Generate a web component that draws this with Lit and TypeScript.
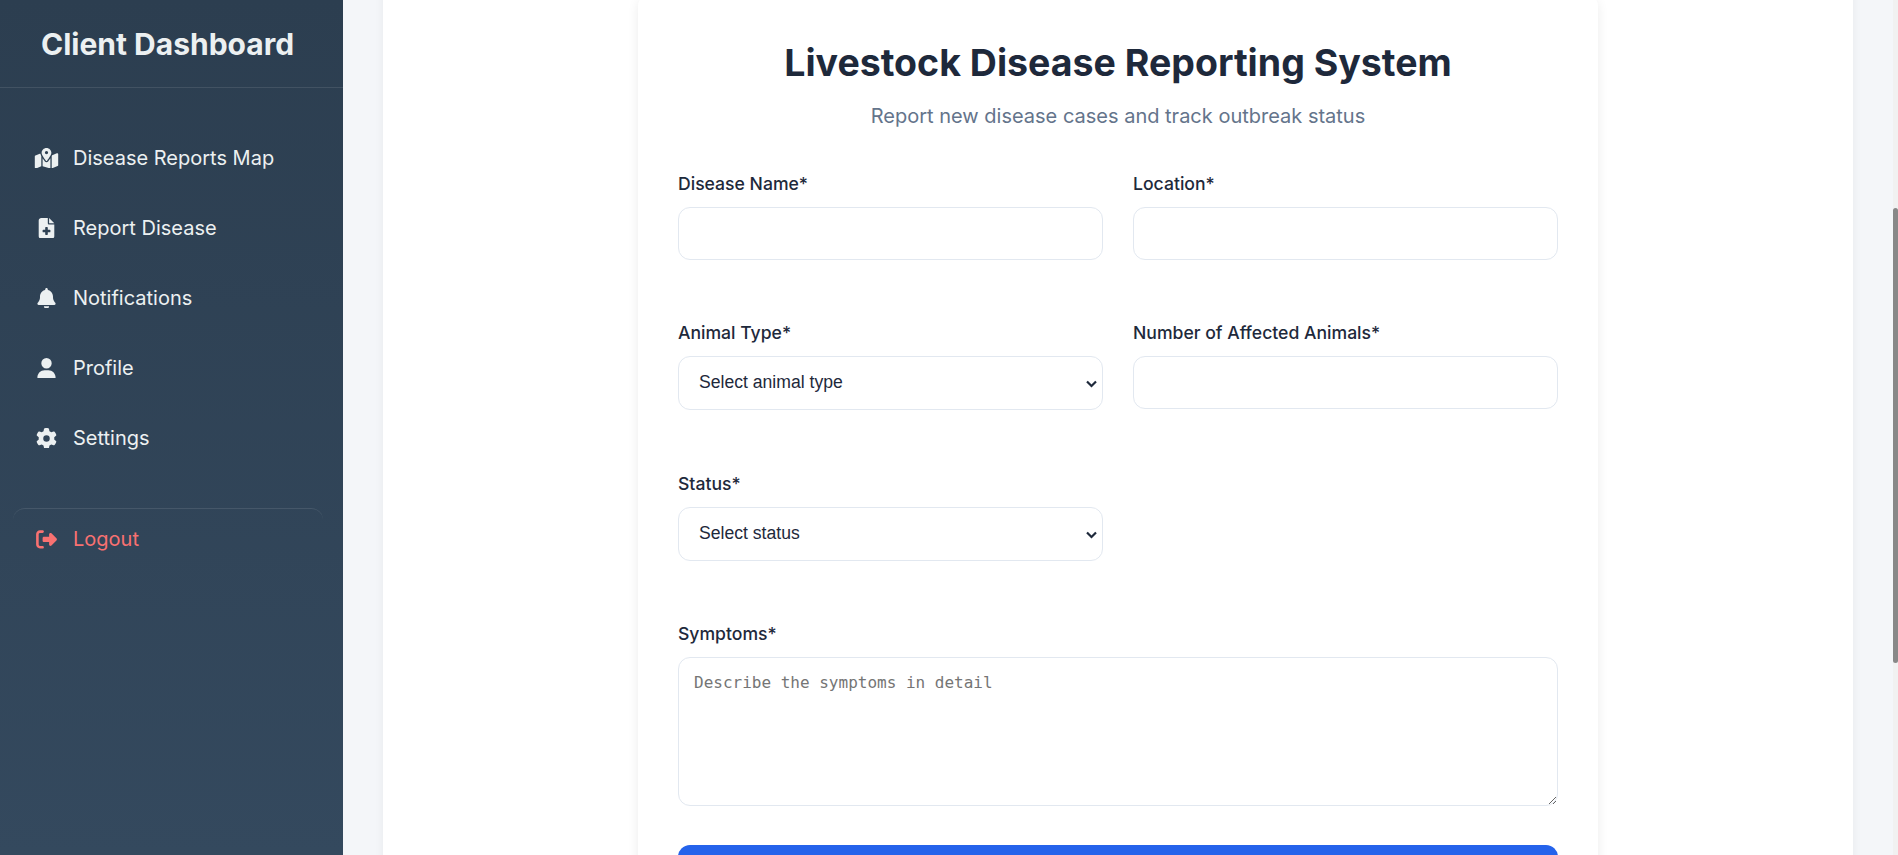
import { LitElement, html, css, svg } from "lit";
import { customElement } from "lit/decorators.js";

const ICONS = {
  map: { vb: "0 0 576 512", d: "M408 120c0 54.6-73.1 151.9-105.2 192c-7.7 9.6-22 9.6-29.6 0C241.1 271.9 168 174.6 168 120C168 53.7 221.7 0 288 0s120 53.7 120 120zm8 80.4c3.5-6.9 6.7-13.8 9.6-20.6c.5-1.2 1-2.5 1.5-3.7l116-46.4C558.9 123.4 576 135 576 152V422.8c0 9.8-6 18.6-15.1 22.3L416 503V200.4zM137.6 138.3c2.4 14.1 7.2 28.3 12.8 41.5c2.9 6.8 6.1 13.7 9.6 20.6V451.8L32.9 502.7C17.1 509 0 497.4 0 480.4V209.6c0-9.8 6-18.6 15.1-22.3l122.6-49zM327.8 332c13.9-17.4 35.7-45.7 56.2-77V504.3L192 449.4V255c20.5 31.3 42.3 59.6 56.2 77c20.5 25.6 59.1 25.6 79.6 0zM288 152a40 40 0 1 0 0-80 40 40 0 1 0 0 80z" },
  file: { vb: "0 0 384 512", d: "M64 0C28.7 0 0 28.7 0 64V448c0 35.3 28.7 64 64 64H320c35.3 0 64-28.7 64-64V160H256c-17.7 0-32-14.3-32-32V0H64zM256 0V128H384L256 0zM160 240c0-8.8 7.2-16 16-16h32c8.8 0 16 7.2 16 16v48h48c8.8 0 16 7.2 16 16v32c0 8.8-7.2 16-16 16H224v48c0 8.8-7.2 16-16 16H176c-8.8 0-16-7.2-16-16V352H112c-8.8 0-16-7.2-16-16V304c0-8.8 7.2-16 16-16h48V240z" },
  bell: { vb: "0 0 448 512", d: "M224 0c-17.7 0-32 14.3-32 32V51.2C119 66 64 130.6 64 208v18.8c0 47-17.3 92.4-48.5 127.6l-7.4 8.3c-8.4 9.4-10.4 22.9-5.3 34.4S19.4 416 32 416H416c12.6 0 24-7.4 29.2-18.9s3.1-25-5.3-34.4l-7.4-8.3C401.3 319.2 384 273.9 384 226.8V208c0-77.4-55-142-128-156.8V32c0-17.7-14.3-32-32-32zm45.3 493.3c12-12 18.7-28.3 18.7-45.3H224 160c0 17 6.7 33.3 18.7 45.3s28.3 18.7 45.3 18.7s33.3-6.7 45.3-18.7z" },
  user: { vb: "0 0 448 512", d: "M224 256A128 128 0 1 0 224 0a128 128 0 1 0 0 256zm-45.7 48C79.8 304 0 383.8 0 482.3C0 498.7 13.3 512 29.7 512H418.3c16.4 0 29.7-13.3 29.7-29.7C448 383.8 368.2 304 269.7 304H178.3z" },
  cog: { vb: "0 0 512 512", d: "M495.9 166.6c3.2 8.7 .5 18.4-6.4 24.6l-43.3 39.4c1.1 8.3 1.7 16.8 1.7 25.4s-.6 17.1-1.7 25.4l43.3 39.4c6.9 6.2 9.6 15.9 6.4 24.6c-4.4 11.9-9.7 23.3-15.8 34.3l-4.7 8.1c-6.6 11-14 21.4-22.1 31.2c-5.9 7.2-15.7 9.6-24.5 6.8l-55.7-17.7c-13.4 10.3-28.2 18.9-44 25.4l-12.5 57.1c-2 9.1-9 16.3-18.2 17.8c-13.8 2.3-28 3.5-42.5 3.5s-28.7-1.2-42.5-3.5c-9.2-1.5-16.2-8.7-18.2-17.8l-12.5-57.1c-15.8-6.5-30.6-15.1-44-25.4L83.1 425.9c-8.8 2.8-18.6 .3-24.5-6.8c-8.1-9.8-15.5-20.2-22.1-31.2l-4.7-8.1c-6.1-11-11.4-22.4-15.8-34.3c-3.2-8.7-.5-18.4 6.4-24.6l43.3-39.4C64.6 273.1 64 264.6 64 256s.6-17.1 1.7-25.4L22.4 191.2c-6.9-6.2-9.6-15.9-6.4-24.6c4.4-11.9 9.7-23.3 15.8-34.3l4.7-8.1c6.6-11 14-21.4 22.1-31.2c5.9-7.2 15.7-9.6 24.5-6.8l55.7 17.7c13.4-10.3 28.2-18.9 44-25.4l12.5-57.1c2-9.1 9-16.3 18.2-17.8C227.3 1.2 241.5 0 256 0s28.7 1.2 42.5 3.5c9.2 1.5 16.2 8.7 18.2 17.8l12.5 57.1c15.8 6.5 30.6 15.1 44 25.4l55.7-17.7c8.8-2.8 18.6-.3 24.5 6.8c8.1 9.8 15.5 20.2 22.1 31.2l4.7 8.1c6.1 11 11.4 22.4 15.8 34.3zM256 336a80 80 0 1 0 0-160 80 80 0 1 0 0 160z" },
  out: { vb: "0 0 512 512", d: "M377.9 105.9L500.7 228.7c7.2 7.2 11.3 17.1 11.3 27.3s-4.1 20.1-11.3 27.3L377.9 406.1c-6.4 6.4-15 9.9-24 9.9c-18.7 0-33.9-15.2-33.9-33.9l0-62.1-128 0c-17.7 0-32-14.3-32-32l0-64c0-17.7 14.3-32 32-32l128 0 0-62.1c0-18.7 15.2-33.9 33.9-33.9c9 0 17.6 3.6 24 9.9zM160 96L96 96c-17.7 0-32 14.3-32 32l0 256c0 17.7 14.3 32 32 32l64 0c17.7 0 32 14.3 32 32s-14.3 32-32 32l-64 0c-53 0-96-43-96-96L0 128C0 75 43 32 96 32l64 0c17.7 0 32 14.3 32 32s-14.3 32-32 32z" },
};
type IconName = keyof typeof ICONS;

const NAV: { icon: IconName; label: string }[] = [
  { icon: "map", label: "Disease Reports Map" },
  { icon: "file", label: "Report Disease" },
  { icon: "bell", label: "Notifications" },
  { icon: "user", label: "Profile" },
  { icon: "cog", label: "Settings" },
];

function icon(name: IconName) {
  const i = ICONS[name];
  return html`<svg class="icon" viewBox=${i.vb} fill="currentColor" aria-hidden="true">${svg`<path d=${i.d}></path>`}</svg>`;
}

@customElement("app-root")
export class AppRoot extends LitElement {
  static styles = css`
    :host {
      display: flex;
      width: 100%;
      height: 855px;
      overflow: hidden;
      font-family: Inter, "Liberation Sans", sans-serif;
      background: #f4f6f9;
    }
    * { box-sizing: border-box; }
    .sidebar {
      width: 343px;
      flex: none;
      height: 855px;
      background: linear-gradient(180deg, #2c3e50, #34495e);
      color: #ecf0f1;
    }
    .brand {
      height: 88px;
      border-bottom: 1px solid rgba(255,255,255,.1);
      display: flex;
      align-items: center;
      padding-left: 41px;
      font-size: 30px;
      font-weight: 700;
    }
    .nav { padding-top: 35px; display: flex; flex-direction: column; }
    .item {
      height: 70px;
      padding-left: 33.5px;
      display: flex;
      align-items: center;
      gap: 14.5px;
      font-size: 20px;
    }
    .icon { width: 25px; height: 20.8px; flex: none; display: block; }
    .logout-wrap {
      margin: 35px 20px 0 13px;
      border-top: 1px solid rgba(255,255,255,.1);
      border-radius: 12px 12px 0 0;
    }
    .logout { color: #f87171; padding-left: 20.5px; height: 60px; }
    main {
      flex: 1;
      min-width: 0;
      height: 855px;
      overflow: hidden;
      padding: 0 40px;
    }
    .panel {
      background: #fff;
      height: 1200px;
      margin-top: -40px;
      box-shadow: 0 0 10px rgba(0,0,0,.05);
      display: flex;
      justify-content: center;
      padding-top: 34px;
    }
    .card {
      width: 960px;
      height: 1100px;
      background: #fff;
      border-radius: 12px;
      box-shadow: 0 4px 12px rgba(0,0,0,.08);
      padding: 45px 40px 40px;
    }
    h1 {
      margin: 0;
      text-align: center;
      font-size: 37.5px;
      line-height: 48px;
      font-weight: 700;
      color: #1e293b;
    }
    .sub {
      margin: 15px 0 0;
      text-align: center;
      font-size: 20px;
      line-height: 28px;
      color: #64748b;
    }
    .grid {
      margin-top: 41px;
      display: grid;
      grid-template-columns: 1fr 1fr;
      column-gap: 30px;
      row-gap: 60.3px;
    }
    .full { grid-column: 1 / -1; }
    label {
      display: block;
      font-size: 17.6px;
      font-weight: 500;
      line-height: 25.6px;
      margin-bottom: 10.4px;
      color: #1e293b;
    }
    input, select, textarea {
      display: block;
      width: 100%;
      border: 1px solid #e2e8f0;
      border-radius: 12px;
      background-color: #fff;
      outline: none;
    }
    input { height: 53px; padding: 0 16px; font-family: Inter, sans-serif; font-size: 17.6px; }
    select {
      height: 54px;
      padding: 0 20px 2px;
      font-family: "Liberation Sans", Arial, sans-serif;
      font-size: 17.6px;
      color: #1e293b;
      appearance: none;
      background-image: url("data:image/svg+xml,%3Csvg xmlns='http://www.w3.org/2000/svg' width='11' height='8' viewBox='0 0 11 8'%3E%3Cpath d='M1 1.5l4.5 4.5 4.5-4.5' fill='none' stroke='%231e293b' stroke-width='2.2'/%3E%3C/svg%3E");
      background-repeat: no-repeat;
      background-position: right 5.5px top 23px;
    }
    textarea { height: 149px; padding: 15px; font-family: "DejaVu Sans Mono", monospace; font-size: 16px; }
    textarea::placeholder { color: #757575; }
    .submit {
      margin-top: 39px;
      height: 56px;
      border-radius: 12px;
      background: #2563eb;
    }
    .scrollbar { width: 5px; flex: none; background: #f1f1f1; height: 855px; padding-top: 208px; }
    .thumb { height: 455px; background: #888; border-radius: 5px; }
  `;

  render() {
    return html`
      <aside class="sidebar">
        <div class="brand">Client Dashboard</div>
        <nav class="nav">
          ${NAV.map((n) => html`<div class="item">${icon(n.icon)}<span>${n.label}</span></div>`)}
          <div class="logout-wrap">
            <div class="item logout">${icon("out")}<span>Logout</span></div>
          </div>
        </nav>
      </aside>
      <main>
        <div class="panel">
          <div class="card">
            <h1>Livestock Disease Reporting System</h1>
            <p class="sub">Report new disease cases and track outbreak status</p>
            <form class="grid">
              <div><label>Disease Name*</label><input type="text" /></div>
              <div><label>Location*</label><input type="text" /></div>
              <div>
                <label>Animal Type*</label>
                <select><option>Select animal type</option></select>
              </div>
              <div><label>Number of Affected Animals*</label><input type="number" /></div>
              <div>
                <label>Status*</label>
                <select><option>Select status</option></select>
              </div>
              <div></div>
              <div class="full">
                <label>Symptoms*</label>
                <textarea placeholder="Describe the symptoms in detail"></textarea>
                <div class="submit"></div>
              </div>
            </form>
          </div>
        </div>
      </main>
      <div class="scrollbar"><div class="thumb"></div></div>
    `;
  }
}
